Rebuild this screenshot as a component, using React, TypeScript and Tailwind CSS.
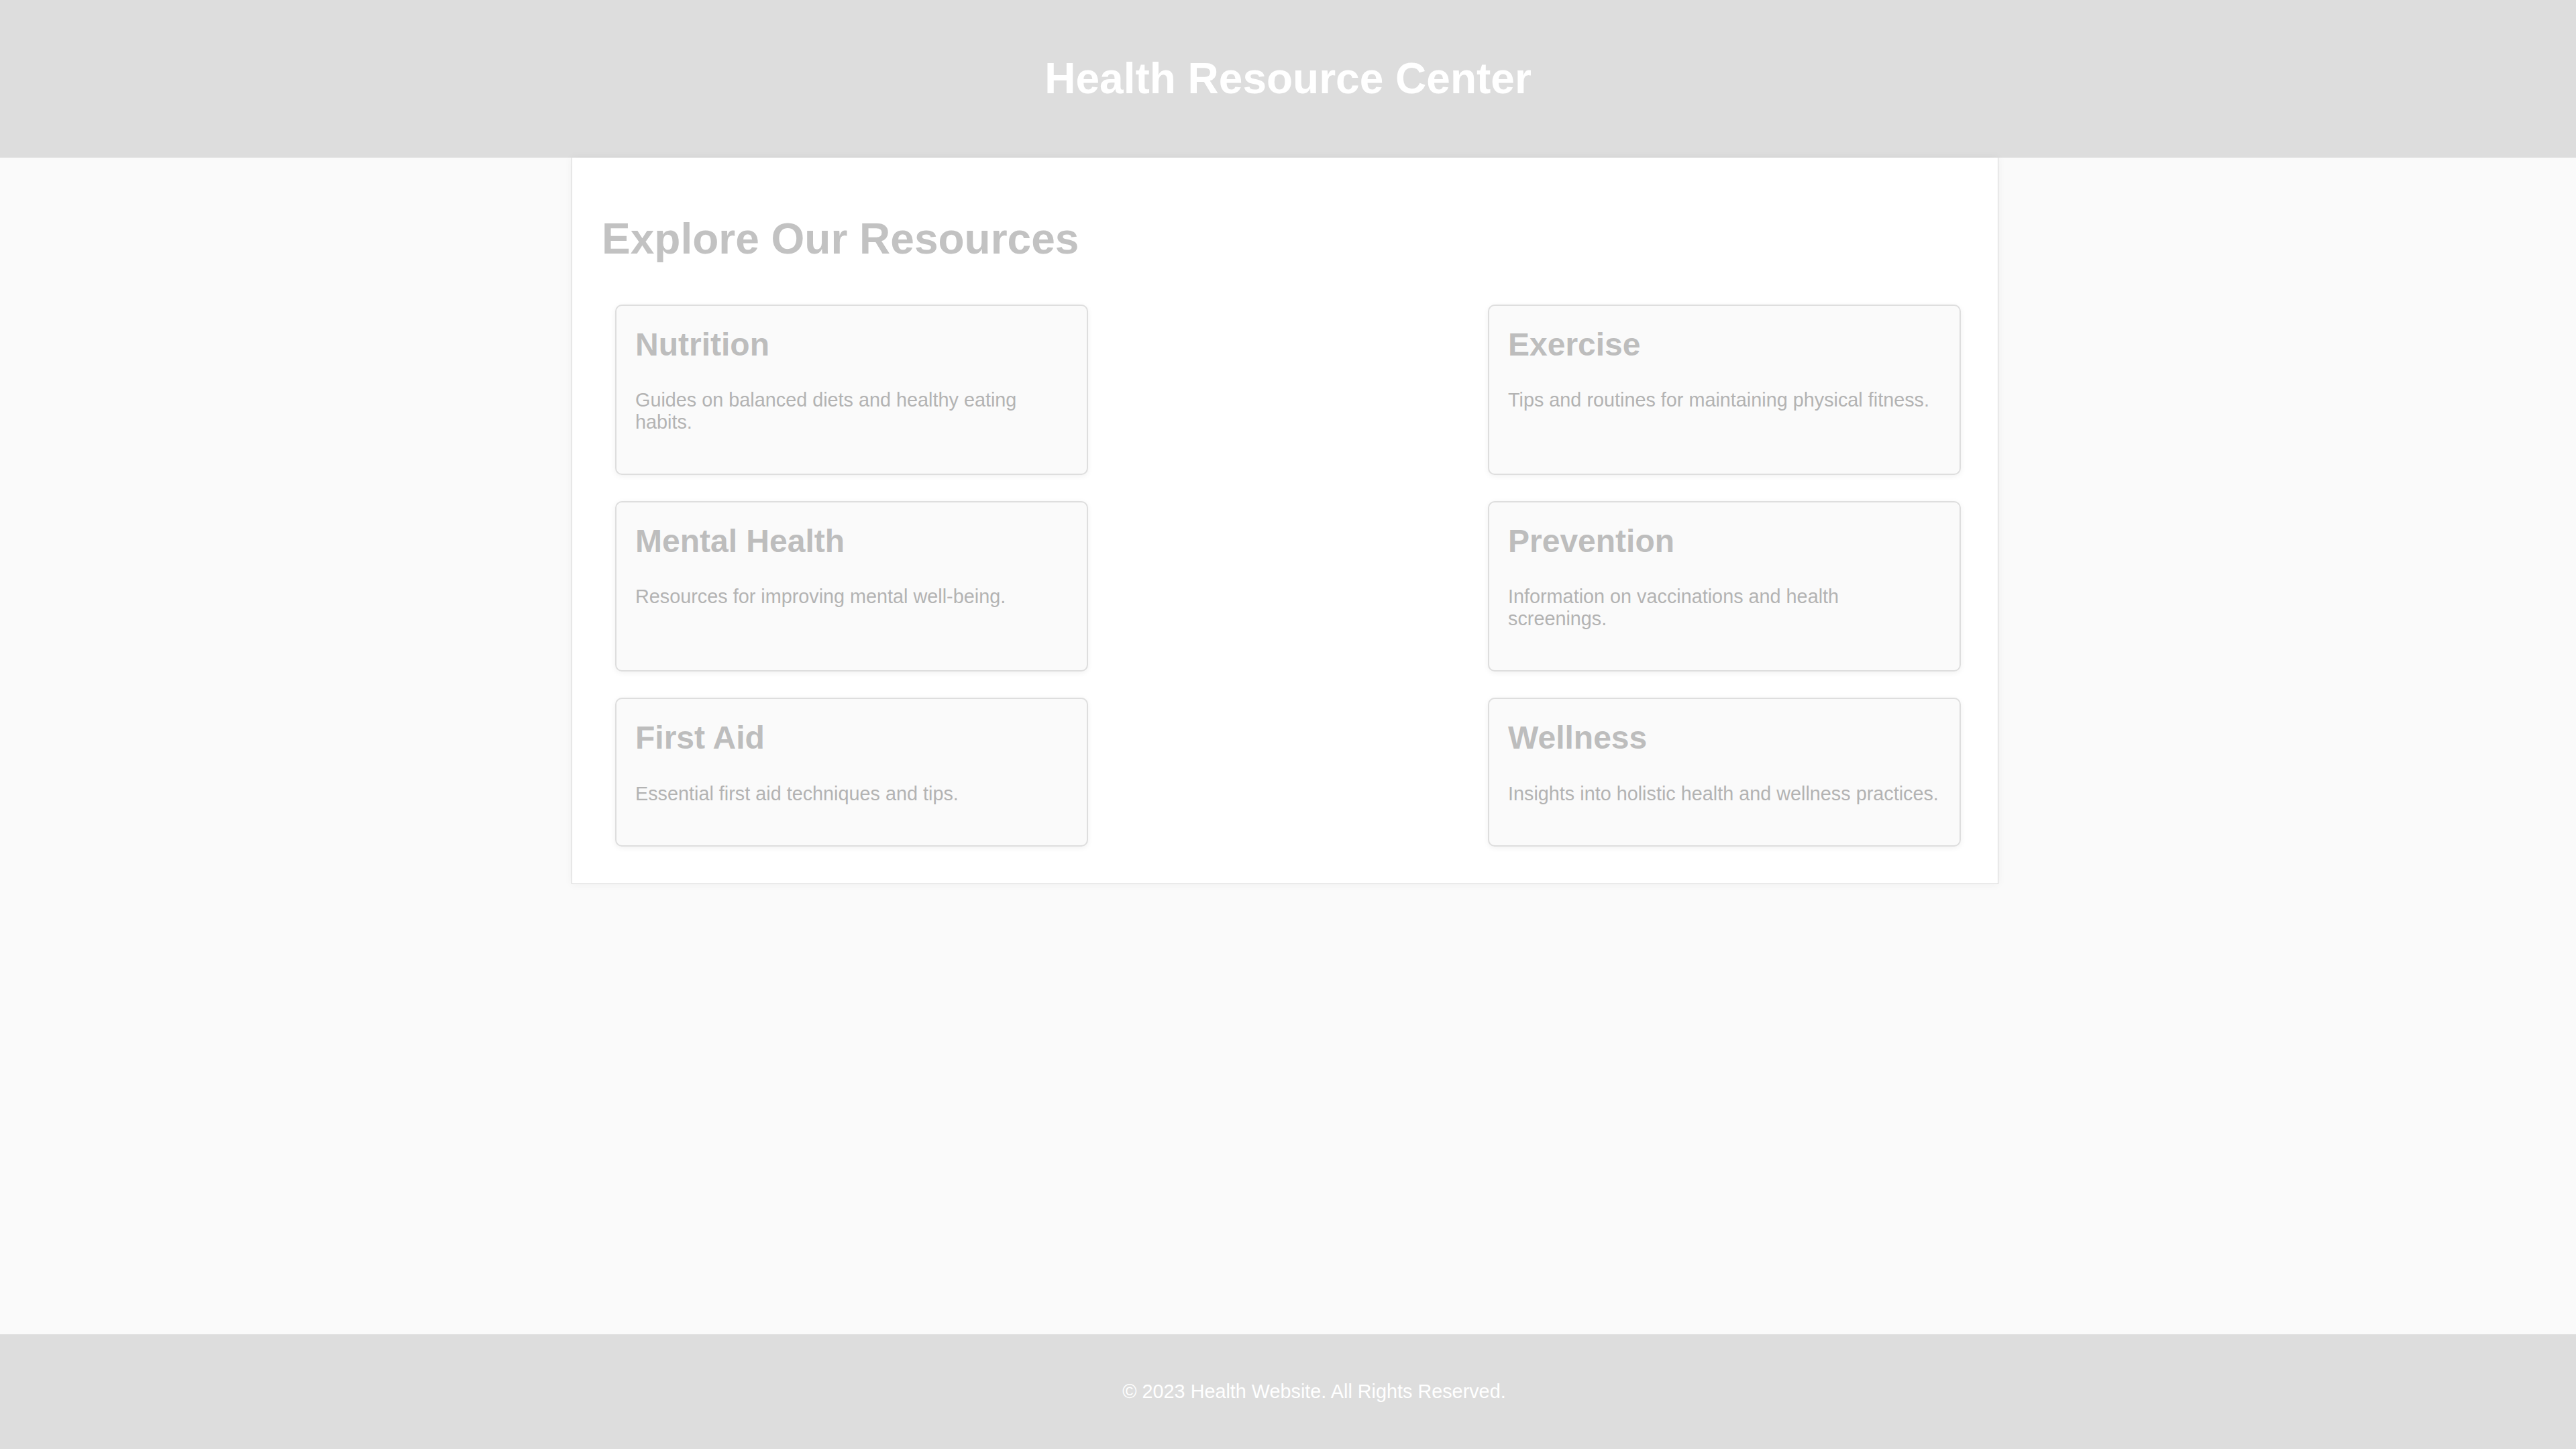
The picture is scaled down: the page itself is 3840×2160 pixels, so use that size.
const resources = [
  { title: "Nutrition", text: "Guides on balanced diets and healthy eating habits." },
  { title: "Exercise", text: "Tips and routines for maintaining physical fitness." },
  { title: "Mental Health", text: "Resources for improving mental well-being." },
  { title: "Prevention", text: "Information on vaccinations and health screenings." },
  { title: "First Aid", text: "Essential first aid techniques and tips." },
  { title: "Wellness", text: "Insights into holistic health and wellness practices." },
];

const ResourceCard = ({ title, text }: { title: string; text: string }) => {
  return (
    <div className="bg-[#fafafa] border-2 border-[#dedede] rounded-[10px] px-[28px] py-[30px] shadow-[0_2px_8px_rgba(0,0,0,0.06)]">
      <h3 className="text-[48px] leading-[1.15] font-bold text-[#bdbdbd] mb-[39px]">{title}</h3>
      <p className="text-[28.8px] leading-[1.15] text-[#b3b3b3] mb-[30px]">{text}</p>
    </div>
  );
};

export default function App() {
  return (
    <div className="min-h-screen flex flex-col bg-[#fafafa] font-['Liberation_Sans',Arial,sans-serif]">
      {/* Header */}
      <header className="h-[235px] bg-[#dddddd] flex items-center justify-center">
        <h1 className="text-[64px] leading-[1.15] font-bold text-white">Health Resource Center</h1>
      </header>

      {/* Resources */}
      <main className="flex-1">
        <section className="ml-[852px] w-[2127px] bg-white border-x border-b border-[#d6d6d6] pl-[44px] pr-[39px] pt-[85px] pb-[55px] shadow-[0_0_12px_rgba(0,0,0,0.05)]">
          <h2 className="text-[64px] leading-[1.15] font-bold text-[#c2c2c2]">Explore Our Resources</h2>
          <div className="mt-[60px] pl-[20px] pr-[16px] grid grid-cols-[705px_705px] justify-between gap-y-[39px]">
            {resources.map((r) => (
              <ResourceCard key={r.title} title={r.title} text={r.text} />
            ))}
          </div>
        </section>
      </main>

      {/* Footer */}
      <footer className="h-[171px] bg-[#dddddd] flex items-center justify-center">
        <p className="pl-[78px] text-[28.8px] leading-[1.15] text-white">© 2023 Health Website. All Rights Reserved.</p>
      </footer>
    </div>
  );
}
